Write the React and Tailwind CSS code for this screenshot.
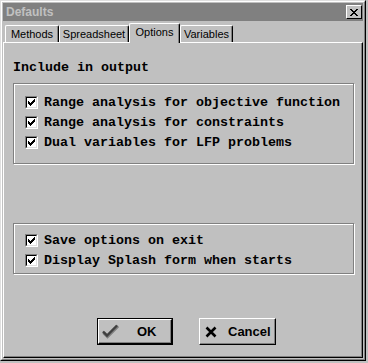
import React from "react";

const sans = { fontFamily: '"Liberation Sans", Arial, sans-serif' };
const mono = { fontFamily: '"Liberation Mono", "Courier New", monospace' };

function CheckMark() {
  return (
    <svg width="7" height="7" viewBox="0 0 7 7" shapeRendering="crispEdges">
      <path
        fill="#000"
        d="M6 0h1v3h-1zM5 1h1v3h-1zM4 2h1v3h-1zM3 3h1v3h-1zM2 4h1v3h-1zM1 3h1v3h-1zM0 2h1v3h-1z"
      />
    </svg>
  );
}

function CheckBox({ label }) {
  return (
    <div className="flex items-center h-[20px]">
      <div className="w-[13px] h-[13px] border border-t-[#808080] border-l-[#808080] border-b-white border-r-white">
        <div className="w-full h-full bg-white border border-t-black border-l-black border-b-[#dfdfdf] border-r-[#dfdfdf] flex items-center justify-center">
          <CheckMark />
        </div>
      </div>
      <span className="ml-[6px] text-[13.33px] font-bold text-black leading-none" style={mono}>
        {label}
      </span>
    </div>
  );
}

function GroupBox({ children, className }) {
  return (
    <div
      className={
        "border border-[#808080] shadow-[inset_1px_1px_0_#fff,1px_1px_0_#fff] " +
        className
      }
    >
      {children}
    </div>
  );
}

function Tab({ label, width, active }) {
  return (
    <div
      className={
        "flex items-center justify-center border-l border-t border-r border-l-white border-t-white border-r-black rounded-tl-[2px] rounded-tr-[2px] shadow-[inset_-1px_0_0_#808080] bg-[#c0c0c0] text-[11px] text-black " +
        (active ? "h-[20px] -mb-[1px] relative z-10 pb-[2px]" : "h-[17px]")
      }
      style={{ ...sans, width }}
    >
      {label}
    </div>
  );
}

function OkIcon() {
  return (
    <svg width="17" height="15" viewBox="0 0 17 15">
      <path d="M1.5 8.5 L5.5 12.5 L16 2" fill="none" stroke="#808080" strokeWidth="3.2" />
      <path d="M1 7.5 L5 11.5 L15 1.5" fill="none" stroke="#404040" strokeWidth="2.4" />
    </svg>
  );
}

function CancelIcon() {
  return (
    <svg width="12" height="12" viewBox="0 0 12 12">
      <path d="M1.5 1.5 L10.5 10.5 M10.5 1.5 L1.5 10.5" stroke="#000" strokeWidth="2.6" />
    </svg>
  );
}

export default function App() {
  return (
    <div className="w-[368px] h-[363px] bg-[#c0c0c0]">
      <div className="w-[366px] h-[361px] border border-t-[#dfdfdf] border-l-[#dfdfdf] border-r-black border-b-black">
        <div className="w-full h-full border border-t-white border-l-white border-r-[#808080] border-b-[#808080] p-[1px] flex flex-col">
          {/* title bar */}
          <div className="h-[18px] bg-[#808080] flex items-center justify-between pl-[3px] pr-[1px]">
            <span className="text-[12px] font-bold text-[#c0c0c0]" style={sans}>
              Defaults
            </span>
            <div className="w-[16px] h-[14px] bg-[#c0c0c0] border border-t-white border-l-white border-r-black border-b-black flex items-center justify-center">
              <svg width="8" height="7" viewBox="0 0 8 7" shapeRendering="crispEdges">
                <path
                  fill="#000"
                  d="M0 0h2v1h-2zM6 0h2v1h-2zM1 1h2v1h-2zM5 1h2v1h-2zM2 2h4v1h-4zM3 3h2v1h-2zM2 4h4v1h-4zM1 5h2v1h-2zM5 5h2v1h-2zM0 6h2v1h-2zM6 6h2v1h-2z"
                />
              </svg>
            </div>
          </div>

          {/* tabs */}
          <div className="flex items-end h-[20px] mt-[1px] pl-[2px]">
            <Tab label="Methods" width={54} />
            <Tab label="Spreadsheet" width={70} />
            <Tab label="Options" width={51} active />
            <Tab label="Variables" width={53} />
          </div>

          {/* panel */}
          <div className="flex-1 border border-t-white border-l-white border-r-black border-b-black shadow-[inset_-1px_-1px_0_#808080] flex flex-col px-[9px]">
            <div className="mt-[18px] text-[13.33px] font-bold leading-none" style={mono}>
              Include in output
            </div>
            <GroupBox className="mt-[9px] h-[81px] pl-[11px] pt-[8px] mr-[-1px]">
              <CheckBox label="Range analysis for objective function" />
              <CheckBox label="Range analysis for constraints" />
              <CheckBox label="Dual variables for LFP problems" />
            </GroupBox>
            <GroupBox className="mt-[59px] h-[51px] pl-[11px] pt-[6px] mr-[-1px]">
              <CheckBox label="Save options on exit" />
              <CheckBox label="Display Splash form when starts" />
            </GroupBox>

            <div className="flex mt-[44px] pl-[84px] gap-[26px]">
              <div className="w-[76px] h-[27px] border border-black">
                <div className="w-full h-full border border-t-white border-l-white border-r-black border-b-black shadow-[inset_-1px_-1px_0_#808080] flex items-center pl-[3px]">
                  <OkIcon />
                  <span className="ml-[18px] text-[13px] font-bold text-black" style={sans}>
                    OK
                  </span>
                </div>
              </div>
              <div className="w-[77px] h-[27px] border border-t-white border-l-white border-r-black border-b-black shadow-[inset_-1px_-1px_0_#808080] flex items-center pl-[5px]">
                <CancelIcon />
                <span className="ml-[11px] text-[13px] font-bold text-black" style={sans}>
                  Cancel
                </span>
              </div>
            </div>
          </div>
        </div>
      </div>
    </div>
  );
}
